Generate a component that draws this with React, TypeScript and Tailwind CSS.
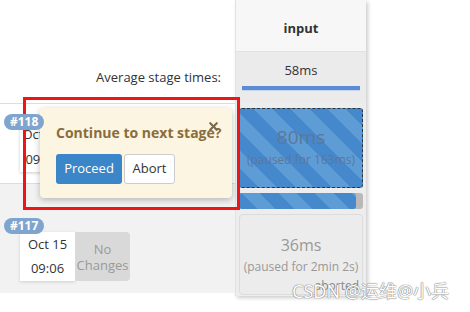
import { X } from "lucide-react";

const stripes =
  "bg-[repeating-linear-gradient(45deg,#4589cc_0_13px,#5e9cd6_13px_26px)]";

function Badge({ label, top }: { label: string; top: string }) {
  return (
    <span className={`absolute left-[4px] ${top} z-10 rounded-full bg-[#7fa5cf] px-[6px] text-[12px] font-bold leading-[16px] text-white`}>
      {label}
    </span>
  );
}

function PopOver() {
  return (
    <div className="absolute left-[40px] top-[108px] h-[90px] w-[192px] rounded-[4px] bg-[#fcf5e2] px-[16px] pt-[15px] shadow-[0_2px_6px_rgba(0,0,0,0.25)]">
      <X className="absolute right-[12px] top-[12px] h-[13px] w-[13px] text-[#7d6a4c]" strokeWidth={4} />
      <div className="whitespace-nowrap text-[14px] font-bold leading-[20px] text-[#8a6d3b]">Continue to next stage?</div>
      <div className="mt-[11px] flex gap-[2px]">
        <button className="h-[30px] w-[66px] rounded-[3px] bg-[#3a86c8] text-[13px] text-white">Proceed</button>
        <button className="h-[30px] w-[51px] rounded-[3px] border border-[#cccccc] bg-white text-[13px] text-[#333]">
          Abort
        </button>
      </div>
    </div>
  );
}

export default function App() {
  return (
    <div className="relative flex h-[312px] w-[470px] overflow-hidden bg-white font-['Open_Sans',sans-serif] text-[#333]">
      {/* Build history column */}
      <div className="flex w-[235px] flex-col">
        <div className="h-[52px]" />
        <div className="flex h-[51px] items-center justify-end pr-[14px] text-[13px]">Average stage times:</div>
        <div className="relative h-[81px] border-y border-[#dddddd] bg-white">
          <Badge label="#118" top="top-[10px]" />
          <div className="absolute left-[20px] top-[18px] flex h-[50px] w-[44px] flex-col items-center justify-around bg-white text-[13px] shadow-[0_1px_3px_rgba(0,0,0,0.2)]">
            <span>Oct 15</span>
            <span>09:06</span>
          </div>
        </div>
        <div className="relative h-[109px] bg-[#f2f2f2]">
          <Badge label="#117" top="top-[34px]" />
          <div className="absolute left-[20px] top-[48px] flex">
            <div className="flex h-[49px] w-[55px] flex-col items-center justify-around bg-white text-[13px] shadow-[0_1px_3px_rgba(0,0,0,0.15)]">
              <span>Oct 15</span>
              <span>09:06</span>
            </div>
            <div className="flex h-[49px] w-[55px] items-center justify-center rounded-r-[4px] bg-[#d9d9d9] text-center text-[13px] leading-[16px] text-[#999]">
              No
              <br />
              Changes
            </div>
          </div>
        </div>
      </div>

      {/* Stage column */}
      <div className="flex h-[296px] w-[131px] flex-col border-l border-[#e2e2e2] bg-[#ededed] shadow-[2px_2px_4px_rgba(0,0,0,0.2)]">
        <div className="flex h-[52px] items-center justify-center border-b border-[#e2e2e2] bg-[#f7f7f7] pt-[6px] text-[13px] font-bold">
          input
        </div>
        <div className="flex h-[51px] flex-col items-center bg-[#ebebeb] px-[6px] pt-[8px]">
          <span className="text-[13px] leading-[20px]">58ms</span>
          <div className="mt-[6px] h-[4px] w-full bg-[#5a8bd4] shadow-[0_1px_0_#c9d7ea]" />
        </div>
        <div className="flex flex-col px-[3px] pt-[5px]">
          <div
            className={`flex h-[80px] flex-col items-center justify-center rounded-[3px] border border-dashed border-[#333] ${stripes} text-[#5d7799]`}
          >
            <span className="text-[19px] leading-[24px]">80ms</span>
            <span className="text-[12px] leading-[22px]">(paused for 163ms)</span>
          </div>
          <div className="mt-[5px] flex h-[16px] rounded-[3px] bg-[#b9b9b9]">
            <div className={`h-full w-[117px] rounded-[3px] ${stripes}`} />
          </div>
          <div className="relative mt-[5px] flex h-[81px] flex-col items-center justify-center rounded-[4px] border border-[#dcdcdc] bg-[#ececec] text-[#999]">
            <span className="text-[16px] leading-[24px]">36ms</span>
            <span className="text-[12px] leading-[20px]">(paused for 2min 2s)</span>
            <span className="absolute bottom-[1px] right-[3px] text-[12px] leading-[14px] text-[#888]">aborted</span>
          </div>
        </div>
      </div>

      <PopOver />

      {/* annotation box */}
      <div className="absolute left-[23px] top-[97px] h-[113px] w-[217px] border-[3px] border-[#ee1515]" />

      <div className="absolute left-[292px] top-[280px] font-['Noto_Sans','Noto_Sans_CJK_SC',sans-serif] text-[18px] leading-[22px] text-white [text-shadow:0_0_1px_#666,0_0_1px_#666]">
        CSDN @运维@小兵
      </div>
    </div>
  );
}
